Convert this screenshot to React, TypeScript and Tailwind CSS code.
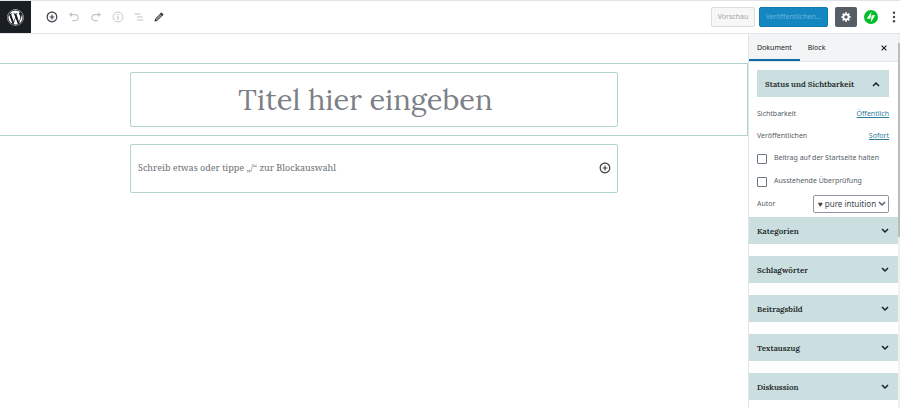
import { useState } from "react";
import { FaWordpress } from "react-icons/fa";

interface IconProps {
  className?: string;
}

function InsertIcon({ className }: IconProps) {
  return (
    <svg viewBox="0 0 20 20" fill="currentColor" className={className}>
      <path d="M10 1c-5 0-9 4-9 9s4 9 9 9 9-4 9-9-4-9-9-9zm0 16c-3.9 0-7-3.1-7-7s3.1-7 7-7 7 3.1 7 7-3.1 7-7 7zm1-11H9v3H6v2h3v3h2v-3h3V9h-3V6z" />
    </svg>
  );
}

function UndoIcon({ className }: IconProps) {
  return (
    <svg viewBox="0 0 20 20" fill="currentColor" className={className}>
      <path d="M12 5H7V2L1 6l6 4V7h5c2.2 0 4 1.8 4 4s-1.8 4-4 4H7v2h5c3.3 0 6-2.7 6-6s-2.7-6-6-6z" />
    </svg>
  );
}

function InfoIcon({ className }: IconProps) {
  return (
    <svg viewBox="0 0 20 20" fill="none" stroke="currentColor" strokeWidth="1.6" className={className}>
      <circle cx="10" cy="10" r="8.2" />
      <path d="M10 5v2M10 8.5V15" strokeWidth="2" />
    </svg>
  );
}

function OutlineIcon({ className }: IconProps) {
  return (
    <svg viewBox="0 0 20 20" fill="none" stroke="currentColor" strokeWidth="2.4" className={className}>
      <path d="M1 4h12M6 10h11M6 16h13" />
    </svg>
  );
}

function PencilIcon({ className }: IconProps) {
  return (
    <svg viewBox="0 0 20 20" className={className}>
      <path d="M2 18l1.2-4.6L14 2.6l3.4 3.4L6.600 16.800z" fill="#8a8f94" stroke="currentColor" strokeWidth="1.6" />
      <path d="M12 3.600L15 .8 19.200 5l-2.800 3zM1.200 18.800l1.400-4.600 3.200 3.200z" fill="currentColor" />
    </svg>
  );
}

function GearIcon({ className }: IconProps) {
  return (
    <svg viewBox="0.5 1.5 18 18" fill="currentColor" className={className}>
      <path d="M18 12h-2.18c-.17.7-.44 1.35-.81 1.93l1.54 1.54-2.1 2.1-1.54-1.54c-.58.36-1.23.63-1.91.79V19H8v-2.18c-.68-.16-1.33-.43-1.91-.79l-1.54 1.54-2.12-2.12 1.54-1.54c-.36-.58-.63-1.23-.79-1.91H1V9.03h2.17c.16-.7.44-1.35.8-1.94L2.43 5.55l2.1-2.1 1.54 1.54c.58-.37 1.24-.64 1.93-.81V2h3v2.18c.68.16 1.33.43 1.91.79l1.54-1.54 2.12 2.12-1.54 1.54c.36.59.64 1.24.8 1.94H18V12zm-8.5 1.5c1.66 0 3-1.34 3-3s-1.34-3-3-3-3 1.34-3 3 1.34 3 3 3z" />
    </svg>
  );
}

function JetpackIcon({ className }: IconProps) {
  return (
    <svg viewBox="0 0 32 32" className={className}>
      <circle cx="16" cy="16" r="16" fill="#00be28" />
      <path d="M14.500 20H6L17 4zM15.500 28l2-16H26z" fill="#fff" />
    </svg>
  );
}

function Chevron({ up, className }: IconProps & { up?: boolean }) {
  return (
    <svg viewBox="0 0 10 10" fill="none" stroke="currentColor" strokeWidth="1.5" className={className}>
      <path d={up ? "m2 7 3-3 3 3" : "m2 3 3 3 3-3"} />
    </svg>
  );
}

const tools = [
  { label: "Block hinzufügen", Icon: InsertIcon, style: "size-3 text-[#40464d]" },
  { label: "Rückgängig", Icon: UndoIcon, style: "size-3 text-[#c4c6c8]" },
  { label: "Wiederholen", Icon: UndoIcon, style: "size-3 text-[#c4c6c8] -scale-x-100" },
  { label: "Inhaltsstruktur", Icon: InfoIcon, style: "size-3 text-[#c4c6c8]" },
  { label: "Block-Navigation", Icon: OutlineIcon, style: "size-[10px] text-[#c4c6c8]" },
  { label: "Bearbeiten", Icon: PencilIcon, style: "size-[10px] text-[#30353a]" },
];

const panels = ["Kategorien", "Schlagwörter", "Beitragsbild", "Textauszug", "Diskussion"];

function Header() {
  return (
    <header className="flex h-[34px] items-center border-y border-[#e2e4e7] bg-white">
      <a
        href="#"
        aria-label="Beiträge anzeigen"
        className="flex h-full w-[31px] items-center justify-center bg-[#191e23] text-white"
      >
        <FaWordpress className="size-[17px]" />
      </a>
      <div className="ml-[15px] flex items-center gap-[10px]">
        {tools.map(({ label, Icon, style }) => (
          <button key={label} type="button" aria-label={label}>
            <Icon className={style} />
          </button>
        ))}
      </div>
      <div className="ml-auto flex items-center">
        <button
          type="button"
          className="h-5 w-11 rounded-xs border border-[#dddddd] bg-[#f7f7f7] text-[7px] text-[#a0a5aa]"
        >
          Vorschau
        </button>
        <button
          type="button"
          className="ml-1 h-5 w-[69px] rounded-xs border border-[#0e7cb3] bg-[#1587c0] text-[7px] text-[#66b6dd]"
        >
          Veröffentlichen…
        </button>
        <button
          type="button"
          aria-label="Einstellungen"
          className="ml-[7px] flex h-5 w-[22px] items-center justify-center rounded-xs bg-[#555d66] text-white"
        >
          <GearIcon className="size-[10px]" />
        </button>
        <button type="button" aria-label="Jetpack" className="ml-[7px]">
          <JetpackIcon className="size-[14px]" />
        </button>
        <button type="button" aria-label="Mehr" className="mr-1 ml-[14px] text-[#40464d]">
          <svg viewBox="0 0 4 12" fill="currentColor" className="h-3 w-1">
            <circle cx="2" cy="1.7" r="1.2" />
            <circle cx="2" cy="6" r="1.2" />
            <circle cx="2" cy="10.3" r="1.2" />
          </svg>
        </button>
      </div>
    </header>
  );
}

function Editor() {
  const [title, setTitle] = useState("");
  const [text, setText] = useState("");

  return (
    <main className="min-w-0 flex-1 pt-[29px]">
      <div className="border border-l-0 border-[#b0d4ca] py-2">
        <input
          aria-label="Titel"
          value={title}
          onChange={(e) => setTitle(e.target.value)}
          placeholder="Titel hier eingeben"
          className="mx-auto block h-[55px] w-full max-w-[488px] rounded-xs border border-[#b0d4ca] pr-4 text-center font-['Lora','Liberation_Serif',serif] text-[29px] text-[#191e23] placeholder:text-[#7b8087] focus:outline-none"
        />
      </div>
      <div className="mx-auto mt-2 flex h-[49px] w-full max-w-[488px] items-center rounded-xs border border-[#b0d4ca] pr-[6px] pb-[2px] pl-[7px]">
        <input
          aria-label="Block"
          value={text}
          onChange={(e) => setText(e.target.value)}
          placeholder="Schreib etwas oder tippe „/“ zur Blockauswahl"
          className="min-w-0 flex-1 font-['Noto_Serif','Liberation_Serif',serif] text-[9px] text-[#191e23] placeholder:text-[#6c7176] focus:outline-none"
        />
        <button type="button" aria-label="Block hinzufügen" className="text-[#40464d]">
          <InsertIcon className="size-3" />
        </button>
      </div>
    </main>
  );
}

interface CheckRowProps {
  label: string;
  checked: boolean;
  onChange: (checked: boolean) => void;
}

function CheckRow({ label, checked, onChange }: CheckRowProps) {
  return (
    <label className="flex h-[23px] items-center gap-[7px]">
      <input
        type="checkbox"
        checked={checked}
        onChange={(e) => onChange(e.target.checked)}
        className="size-[10px] appearance-none rounded-[1px] border border-[#6c7781] bg-white checked:bg-[#11a0d2]"
      />
      {label}
    </label>
  );
}

function Sidebar() {
  const [sticky, setSticky] = useState(false);
  const [pending, setPending] = useState(false);

  return (
    <aside className="flex w-[152px] shrink-0 bg-[#f1f1f1]">
      <div className="min-w-0 flex-1 border-l border-[#e2e4e7] bg-white">
        <div className="flex h-7 items-stretch border-b border-[#e2e4e7] bg-[#f3f4f5] text-[7px] text-[#191e23]">
          <button type="button" className="border-y-2 border-t-transparent border-b-[#0f6ba8] px-2 pt-px">
            Dokument
          </button>
          <button type="button" className="px-2 pt-px">
            Block
          </button>
          <button type="button" aria-label="Einstellungen schließen" className="mr-[10px] ml-auto">
            <svg viewBox="0 0 10 10" stroke="currentColor" strokeWidth="1.4" className="size-2">
              <path d="m2 2 6 6M8 2 2 8" />
            </svg>
          </button>
        </div>

        <div className="pt-2 pr-[9px] pl-2 text-[7px] text-[#555d66]">
          <button
            type="button"
            className="flex h-[27px] w-full items-center justify-between bg-[#cbdfe0] px-2 font-['Lora','Liberation_Serif',serif] text-[8px] font-semibold text-[#191e23]"
          >
            Status und Sichtbarkeit
            <Chevron up className="size-[10px]" />
          </button>
          <div className="mt-[6px] flex h-[22px] items-center justify-between">
            <span>Sichtbarkeit</span>
            <a href="#" className="text-[#2e7d9e] underline">
              Öffentlich
            </a>
          </div>
          <div className="flex h-[22px] items-center justify-between">
            <span>Veröffentlichen</span>
            <a href="#" className="text-[#2e7d9e] underline">
              Sofort
            </a>
          </div>
          <CheckRow label="Beitrag auf der Startseite halten" checked={sticky} onChange={setSticky} />
          <CheckRow label="Ausstehende Überprüfung" checked={pending} onChange={setPending} />
          <div className="flex h-[22px] items-center justify-between">
            <label htmlFor="author">Autor</label>
            <div className="relative">
              <select
                id="author"
                className="block h-[18px] w-[76px] appearance-none rounded-xs border border-[#8d96a0] bg-white pl-1 text-[8px] text-[#40464d]"
              >
                <option>♥ pure intuition</option>
              </select>
              <Chevron className="pointer-events-none absolute top-1 right-[2px] size-[10px]" />
            </div>
          </div>
        </div>

        <div className="mt-[2px] flex flex-col gap-3">
          {panels.map((name) => (
            <button
              key={name}
              type="button"
              className="flex h-[27px] items-center justify-between bg-[#cbdfe0] px-2 font-['Lora','Liberation_Serif',serif] text-[8px] font-semibold text-[#191e23]"
            >
              {name}
              <Chevron className="size-[10px]" />
            </button>
          ))}
        </div>
      </div>
      <div className="mt-[9px] h-[194px] w-[2px] bg-[#bcbcbc]" />
    </aside>
  );
}

export default function App() {
  return (
    <div className="flex min-h-screen flex-col bg-white font-['Noto_Sans',sans-serif]">
      <Header />
      <div className="flex flex-1">
        <Editor />
        <Sidebar />
      </div>
    </div>
  );
}
